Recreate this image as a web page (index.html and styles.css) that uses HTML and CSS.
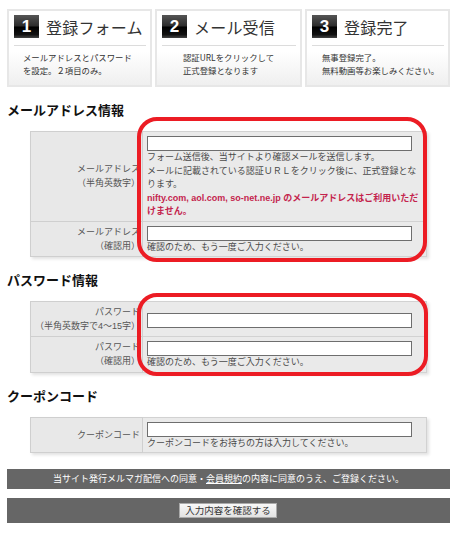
FILE: index.html
```html
<!DOCTYPE html>
<html lang="ja">
<head>
<meta charset="utf-8">
<title>登録フォーム</title>
<link rel="stylesheet" href="styles.css">
</head>
<body>
<div class="page">
  <div class="steps">
    <div class="step">
      <div class="step-head"><span class="badge">1</span><span class="step-title">登録フォーム</span></div>
      <p class="step-desc">メールアドレスとパスワード<br>を設定。２項目のみ。</p>
    </div>
    <div class="step">
      <div class="step-head"><span class="badge">2</span><span class="step-title">メール受信</span></div>
      <p class="step-desc indent">認証URLをクリックして<br>正式登録となります</p>
    </div>
    <div class="step">
      <div class="step-head"><span class="badge">3</span><span class="step-title">登録完了</span></div>
      <p class="step-desc indent">無事登録完了。<br>無料動画等お楽しみください。</p>
    </div>
  </div>

  <h2 class="sec-title">メールアドレス情報</h2>
  <div class="form-block">
    <table class="form-table">
      <tr>
        <th>メールアドレス<br>（半角英数字）</th>
        <td>
          <input class="field" type="text">
          <p class="note">フォーム送信後、当サイトより確認メールを送信します。<br>メールに記載されている認証ＵＲＬをクリック後に、正式登録となります。</p>
          <p class="note warn">nifty.com, aol.com, so-net.ne.jp のメールアドレスはご利用いただ<br>けません。</p>
        </td>
      </tr>
      <tr>
        <th>メールアドレス<br>（確認用）</th>
        <td>
          <input class="field" type="text">
          <p class="note">確認のため、もう一度ご入力ください。</p>
        </td>
      </tr>
    </table>
    <div class="highlight hl-mail"></div>
  </div>

  <h2 class="sec-title">パスワード情報</h2>
  <div class="form-block">
    <table class="form-table">
      <tr>
        <th>パスワード<br>（半角英数字で4～15字）</th>
        <td><input class="field" type="password"></td>
      </tr>
      <tr>
        <th>パスワード<br>（確認用）</th>
        <td>
          <input class="field" type="password">
          <p class="note">確認のため、もう一度ご入力ください。</p>
        </td>
      </tr>
    </table>
    <div class="highlight hl-pass"></div>
  </div>

  <h2 class="sec-title">クーポンコード</h2>
  <div class="form-block">
    <table class="form-table">
      <tr>
        <th>クーポンコード</th>
        <td>
          <input class="field" type="text">
          <p class="note">クーポンコードをお持ちの方は入力してください。</p>
        </td>
      </tr>
    </table>
  </div>

  <div class="agree-bar">当サイト発行メルマガ配信への同意・<a class="agree-link" href="#">会員規約</a>の内容に同意のうえ、ご登録ください。</div>
  <div class="submit-bar"><button class="submit-btn" type="button">入力内容を確認する</button></div>
</div>
</body>
</html>
```

FILE: styles.css
```css
* { box-sizing: border-box; }

body {
  margin: 0;
  background: #fff;
  font-family: "Liberation Sans", "Noto Sans CJK JP", sans-serif;
  color: #333;
}

.page {
  width: 443px;
  margin-left: 7px;
  padding-top: 9px;
}

/* steps */
.steps {
  display: grid;
  grid-template-columns: 145px 147px 145px;
  gap: 3px;
}

.step {
  height: 78px;
  border: 2px solid #e7e7e7;
  background: linear-gradient(#ffffff 55%, #efefef);
  padding: 4px 4px 0 5px;
}

.step-head {
  display: flex;
  align-items: center;
  gap: 7px;
  height: 23px;
  border-bottom: 1px solid #dcdcdc;
  box-sizing: content-box;
  padding-bottom: 7px;
}

.badge {
  width: 25px;
  height: 23px;
  background: linear-gradient(#555 0%, #2c2c2c 48%, #000 52%, #111 85%, #444 100%);
  color: #fff;
  font-family: "Liberation Sans", sans-serif;
  font-weight: bold;
  font-size: 17px;
  line-height: 23px;
  text-align: center;
}

.step-title {
  font-family: "Noto Sans CJK JP", sans-serif;
  font-size: 16px;
  line-height: 20px;
  color: #333;
  letter-spacing: 0.2px;
}

.step-desc {
  margin: 5px 0 0 9px;
  font-family: "Noto Sans CJK JP", sans-serif;
  font-size: 8.4px;
  line-height: 13px;
  color: #333;
  white-space: nowrap;
}

.step-desc.indent { margin-left: 21px; }
.step:last-child .step-desc.indent { margin-left: 10px; }

/* section titles */
.sec-title {
  margin: 15px 0 13px 0;
  font-family: "Noto Sans CJK JP", sans-serif;
  font-size: 13px;
  line-height: 16px;
  font-weight: bold;
  color: #111;
}

/* form tables */
.form-block {
  position: relative;
  margin-left: 23px;
  width: 397px;
}

.form-table {
  width: 397px;
  table-layout: fixed;
  border-collapse: collapse;
  border: 1px solid #cdcdcd;
  box-shadow: 2px 2px 3px rgba(0, 0, 0, 0.12);
  font-family: "Liberation Sans", "Noto Sans CJK JP", sans-serif;
}

.form-table th {
  width: 112px;
  background: #e8e8e8;
  border: 1px solid #cfcfcf;
  padding: 3px 2px 3px 0;
  text-align: right;
  vertical-align: middle;
  font-weight: normal;
  font-size: 9px;
  line-height: 14px;
  color: #555;
}

.form-table td {
  background: #eaeaea;
  border: 1px solid #d2d2d2;
  padding: 4px 4px 2px 4px;
  vertical-align: middle;
}

.field {
  display: block;
  width: 265px;
  height: 15px;
  margin: 0;
  border: 1px solid #6e6e6e;
  background: #fff;
  padding: 0 2px;
}

.note {
  width: 274px;
  margin: 0;
  font-size: 9px;
  line-height: 13.5px;
  color: #4a4a4a;
}

.note.warn {
  color: #c4244d;
  font-weight: bold;
  white-space: nowrap;
}

/* red highlight frames */
.highlight {
  position: absolute;
  border: 4px solid #ec1c24;
  border-radius: 20px;
  pointer-events: none;
}

.hl-mail {
  left: 107px;
  top: -14px;
  width: 290px;
  height: 145px;
}

.hl-pass {
  left: 107px;
  top: -8px;
  width: 291px;
  height: 83px;
}

/* bottom bars */
.agree-bar {
  margin-top: 16px;
  height: 20px;
  background: #666;
  color: #fff;
  text-align: center;
  font-family: "Noto Sans CJK JP", sans-serif;
  font-size: 9px;
  line-height: 20px;
}

.agree-link {
  color: #fff;
  text-decoration: underline;
}

.submit-bar {
  margin-top: 9px;
  height: 25px;
  background: #666;
  display: flex;
  justify-content: center;
  align-items: center;
}

.submit-btn {
  width: 98px;
  height: 15px;
  padding: 0;
  margin-left: -1px;
  border: 1px solid #aaa;
  border-radius: 0;
  background: linear-gradient(#f8f8f8, #e2e2e2);
  font-family: "Noto Sans CJK JP", sans-serif;
  font-size: 9.5px;
  line-height: 13px;
  color: #333;
}
```
